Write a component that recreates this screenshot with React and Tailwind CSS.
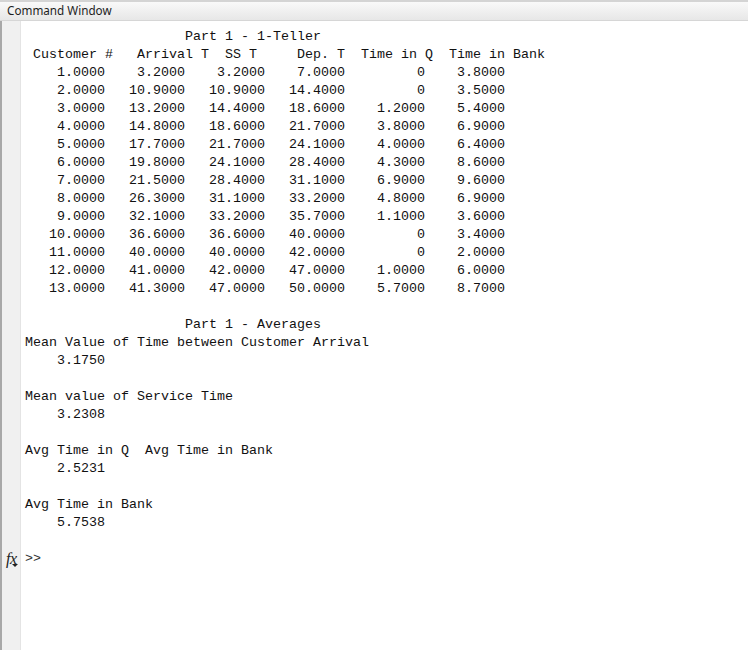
const table = [
  '                    Part 1 - 1-Teller',
  ' Customer #   Arrival T  SS T     Dep. T  Time in Q  Time in Bank',
  '    1.0000    3.2000    3.2000    7.0000         0    3.8000',
  '    2.0000   10.9000   10.9000   14.4000         0    3.5000',
  '    3.0000   13.2000   14.4000   18.6000    1.2000    5.4000',
  '    4.0000   14.8000   18.6000   21.7000    3.8000    6.9000',
  '    5.0000   17.7000   21.7000   24.1000    4.0000    6.4000',
  '    6.0000   19.8000   24.1000   28.4000    4.3000    8.6000',
  '    7.0000   21.5000   28.4000   31.1000    6.9000    9.6000',
  '    8.0000   26.3000   31.1000   33.2000    4.8000    6.9000',
  '    9.0000   32.1000   33.2000   35.7000    1.1000    3.6000',
  '   10.0000   36.6000   36.6000   40.0000         0    3.4000',
  '   11.0000   40.0000   40.0000   42.0000         0    2.0000',
  '   12.0000   41.0000   42.0000   47.0000    1.0000    6.0000',
  '   13.0000   41.3000   47.0000   50.0000    5.7000    8.7000',
  '',
  '                    Part 1 - Averages',
  'Mean Value of Time between Customer Arrival',
  '    3.1750',
  '',
  'Mean value of Service Time',
  '    3.2308',
  '',
  'Avg Time in Q  Avg Time in Bank',
  '    2.5231',
  '',
  'Avg Time in Bank',
  '    5.7538',
  '',
];

function FxIcon() {
  return (
    <div className="relative h-[18px] pl-[4px]">
      <span className="font-['Liberation_Serif',serif] italic text-[16px] leading-[18px] text-[#222] tracking-[-0.5px]">fx</span>
      <svg className="absolute left-[10px] top-[14px]" width="6" height="4" viewBox="0 0 6 4">
        <path d="M0 0 L6 0 L3 3 Z" fill="#222" />
      </svg>
    </div>
  );
}

export default function App() {
  return (
    <div className="w-[748px] h-[650px] flex flex-col bg-white overflow-hidden">
      <div className="h-[21px] shrink-0 border-t-2 border-[#d4d4d4] border-b border-b-[#d6d6d6] bg-gradient-to-b from-[#f9f9f9] to-[#e7e7e7] flex items-center pl-[7px]">
        <span className="font-['Noto_Sans',sans-serif] text-[11.7px] text-[#1e1e1e] leading-none">Command Window</span>
      </div>

      <div className="flex-1 grid grid-cols-[21px_1fr] grid-rows-[auto_auto_1fr] font-['Liberation_Mono',monospace] text-[13.333px] leading-[18px] text-[#111]">
        <div className="bg-[#f0f0f0] border-l-2 border-l-[#a8a8a8] border-r border-r-[#e4e4e4]" />
        <pre className="pt-[7px] pl-[4px] font-['Liberation_Mono',monospace]">
          {table.map((l, i) => (
            <div key={i} className="h-[18px] whitespace-pre">{l}</div>
          ))}
        </pre>

        <div className="bg-[#f0f0f0] border-l-2 border-l-[#a8a8a8] border-r border-r-[#e4e4e4]">
          <FxIcon />
        </div>
        <div className="pl-[4px] h-[18px] whitespace-pre text-[#333]">&gt;&gt;</div>

        <div className="bg-[#f0f0f0] border-l-2 border-l-[#a8a8a8] border-r border-r-[#e4e4e4]" />
        <div />
      </div>
    </div>
  );
}
